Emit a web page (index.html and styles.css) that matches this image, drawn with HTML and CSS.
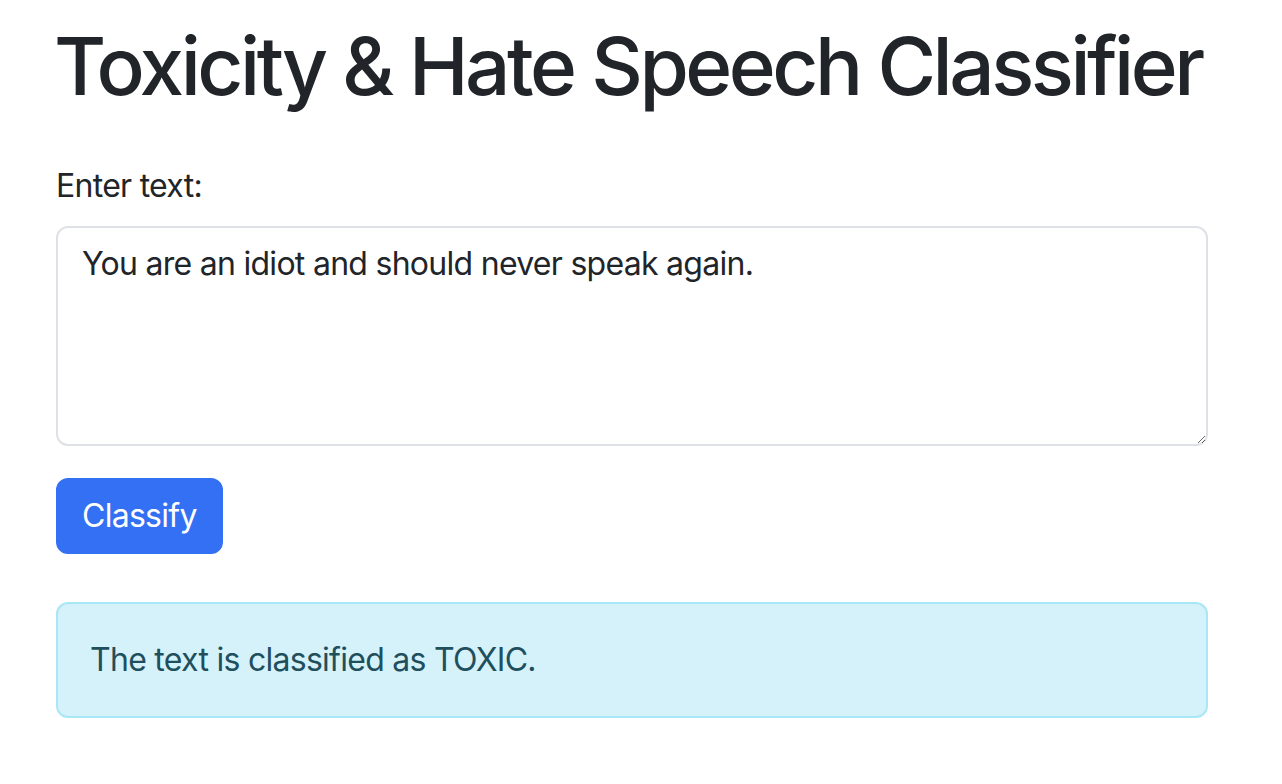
FILE: index.html
```html
<!DOCTYPE html>
<html lang="en">
<head>
<meta charset="utf-8">
<title>Toxicity &amp; Hate Speech Classifier</title>
<link rel="stylesheet" href="styles.css">
</head>
<body>
<div class="container">
  <h1 class="title">Toxicity &amp; Hate Speech Classifier</h1>
  <form class="form">
    <label class="form-label" for="text">Enter text:</label>
    <textarea class="form-control" id="text" rows="4">You are an idiot and should never speak again.</textarea>
    <button type="button" class="btn">Classify</button>
  </form>
  <div class="alert">The text is classified as TOXIC.</div>
</div>
</body>
</html>
```

FILE: styles.css
```css
* { box-sizing: border-box; }
html, body { margin: 0; padding: 0; background: #fff; }
body {
  font-family: Inter, "Noto Sans", "Liberation Sans", sans-serif;
  font-size: 32px;
  line-height: 48px;
  letter-spacing: -0.72px;
  color: #212529;
}
.container {
  width: 1152px;
  margin: 0 0 0 56px;
  padding-top: 18px;
}
.title {
  font-size: 80px;
  line-height: 96px;
  font-weight: 500;
  margin: 0 0 48px -2px;
  letter-spacing: -3.5px;
  white-space: nowrap;
}
.form { display: flex; flex-direction: column; align-items: flex-start; }
.form-label {
  display: block;
  margin-bottom: 16px;
}
.form-control {
  display: block;
  width: 100%;
  height: 220px;
  padding: 12px 24px;
  font: inherit;
  letter-spacing: inherit;
  color: #212529;
  border: 2px solid #dee2e6;
  border-radius: 12px;
  resize: vertical;
  background: #fff;
}
.btn {
  margin-top: 32px;
  font: inherit;
  letter-spacing: inherit;
  color: #fff;
  background: #3470f4;
  border: 2px solid #3470f4;
  border-radius: 12px;
  padding: 12px 24px;
  cursor: pointer;
}
.alert {
  margin-top: 48px;
  padding: 32px;
  background: #d5f2fa;
  border: 2px solid #a9e7f6;
  border-radius: 12px;
  color: #1f4f5d;
}
```
